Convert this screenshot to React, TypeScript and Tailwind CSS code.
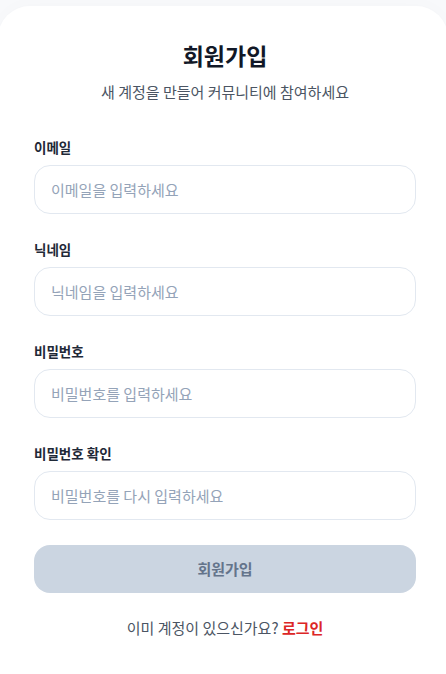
import React from "react";

const font = { fontFamily: '"Noto Sans CJK KR", "Noto Sans", sans-serif' };

function Field({ label, placeholder, type }: { label: string; placeholder: string; type: string }) {
  return (
    <div className="flex flex-col">
      <label className="text-[13.5px] leading-[20px] font-semibold text-[#1f2937] mb-[8px]">{label}</label>
      <input
        type={type}
        placeholder={placeholder}
        className="h-[49px] w-full rounded-[16px] border border-[#e2e8f0] bg-white px-[16px] text-[15px] text-[#0f172a] placeholder:text-[#94a3b8] outline-none"
        style={font}
      />
    </div>
  );
}

export default function App() {
  return (
    <div className="min-h-screen bg-[#f8f9fb] overflow-hidden" style={font}>
      <div className="mt-[6px] -mx-[2px] min-h-[700px] rounded-[32px] bg-white shadow-[0_0_20px_rgba(15,23,42,0.02)] pl-[36px] pr-[32px] pt-[35px]">
        <h1 className="text-center text-[23px] leading-[28px] font-bold text-[#111827]">회원가입</h1>
        <p className="mt-[13px] text-center text-[15px] leading-[20px] text-[#4b5563]">새 계정을 만들어 커뮤니티에 참여하세요</p>
        <form className="mt-[35px] flex flex-col gap-[25px]" onSubmit={(e) => e.preventDefault()}>
          <Field label="이메일" placeholder="이메일을 입력하세요" type="email" />
          <Field label="닉네임" placeholder="닉네임을 입력하세요" type="text" />
          <Field label="비밀번호" placeholder="비밀번호를 입력하세요" type="password" />
          <Field label="비밀번호 확인" placeholder="비밀번호를 다시 입력하세요" type="password" />
          <button
            type="submit"
            className="h-[48px] w-full rounded-[16px] bg-[#cbd5e1] text-[15px] font-semibold text-[#64748b]"
          >
            회원가입
          </button>
        </form>
        <p className="mt-[25px] text-center text-[15px] leading-[20px] text-[#4b5563]">
          이미 계정이 있으신가요? <a className="font-bold text-[#dc2626]">로그인</a>
        </p>
      </div>
    </div>
  );
}
